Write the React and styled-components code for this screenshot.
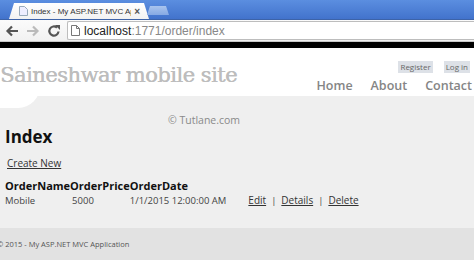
import styled, { createGlobalStyle } from 'styled-components';

const GlobalStyle = createGlobalStyle`
  html, body {
    margin: 0;
    padding: 0;
    background: #ffffff;
  }
  body {
    font-family: "Open Sans", "Noto Sans", sans-serif;
  }
`;

const Window = styled.div`
  width: 474px;
  height: 260px;
  display: flex;
  flex-direction: column;
  overflow: hidden;
`;

const TabStrip = styled.div`
  height: 19px;
  display: flex;
  align-items: flex-end;
  padding-left: 9px;
  background: linear-gradient(#5b8ee0, #4273cc);
  border-bottom: 1px solid #3d63a8;
`;

const Tab = styled.div`
  width: 140px;
  height: 16px;
  display: flex;
  align-items: center;
  gap: 3px;
  padding: 0 9px 0 10px;
  box-sizing: border-box;
  background: linear-gradient(#ffffff, #f2f2f2);
  clip-path: polygon(5px 0, calc(100% - 5px) 0, 100% 100%, 0 100%);
  font-family: "Liberation Sans", Arial, sans-serif;
  font-size: 8px;
  color: #333;
  white-space: nowrap;
  overflow: hidden;
`;

const TabTitle = styled.span`
  flex: 1;
  min-width: 0;
  overflow: hidden;
`;

const TabClose = styled.span`
  font-size: 10px;
  font-weight: bold;
  color: #555;
`;

const NewTab = styled.div`
  width: 22px;
  height: 9px;
  margin: 0 0 4px -2px;
  background: linear-gradient(#a9c4ee, #86a9e3);
  clip-path: polygon(3px 0, calc(100% - 3px) 0, 100% 100%, 0 100%);
`;

const Toolbar = styled.div`
  height: 21px;
  display: flex;
  align-items: center;
  gap: 5px;
  padding-left: 4px;
  background: linear-gradient(#fbfbfb, #f1f1f1);
  border-bottom: 1px solid #c8c8c8;
`;

const NavIcon = styled.div`
  width: 16px;
  height: 16px;
  display: flex;
  align-items: center;
  justify-content: center;
`;

const Omnibox = styled.div`
  flex: 1;
  height: 17px;
  display: flex;
  align-items: center;
  gap: 4px;
  padding-left: 3px;
  background: #ffffff;
  border: 1px solid #bdbdbd;
  border-right: none;
  border-radius: 2px 0 0 2px;
  font-family: "Liberation Sans", Arial, sans-serif;
  font-size: 12px;
  color: #888;
`;

const Host = styled.span`
  color: #222;
`;

const BlackBar = styled.div`
  height: 6px;
  background: #000;
`;

const Page = styled.div`
  flex: 1;
  display: flex;
  flex-direction: column;
  background: #efefef;
`;

const Header = styled.header`
  position: relative;
  z-index: 1;
  height: 48px;
  display: flex;
  justify-content: space-between;
  background: #ffffff;

  &::after {
    content: '';
    position: absolute;
    left: -22px;
    top: 38px;
    width: 62px;
    height: 22px;
    border-radius: 0 0 40px 0;
    background: #ffffff;
  }
`;

const SiteTitle = styled.div`
  padding-top: 15px;
  font-family: "DejaVu Serif", serif;
  font-size: 21px;
  letter-spacing: -0.5px;
  color: #bdbdbd;
  text-shadow: 0.4px 0 0 #bdbdbd;
  white-space: nowrap;
`;

const HeaderRight = styled.div`
  display: flex;
  flex-direction: column;
  align-items: flex-end;
  padding-top: 13px;
  gap: 5px;
`;

const LoginLinks = styled.div`
  display: flex;
  gap: 11px;
  padding-right: 4px;
`;

const LoginLink = styled.a`
  padding: 1px 2px;
  background: #dde1e7;
  font-size: 8px;
  line-height: 10px;
  color: #666;
  text-decoration: none;
`;

const Nav = styled.nav`
  display: flex;
  gap: 18px;
  padding-right: 2px;
`;

const NavLink = styled.a`
  font-size: 12.5px;
  font-weight: 600;
  color: #858585;
  text-decoration: none;
  line-height: 15px;
`;

const Main = styled.main`
  flex: 1;
  position: relative;
  padding: 18px 5px 0;
`;

const Watermark = styled.div`
  position: absolute;
  left: 168px;
  top: 17px;
  font-size: 10.5px;
  color: #8a8a8a;
`;

const Heading = styled.h2`
  margin: 13px 0 0;
  font-size: 17px;
  font-weight: 700;
  color: #111;
  line-height: 20px;
`;

const Link = styled.a`
  font-size: 10px;
  color: #333;
  text-decoration: underline;
`;

const CreateLink = styled(Link)`
  display: inline-block;
  margin: 9px 0 0 2px;
`;

const Table = styled.table`
  margin-top: 6px;
  border-collapse: collapse;
`;

const Th = styled.th`
  padding: 0;
  text-align: left;
  font-size: 11px;
  font-weight: 700;
  color: #111;
  line-height: 15px;
`;

const Td = styled.td`
  padding: 0 ${(p) => p.$pr || 0}px 0 ${(p) => p.$pl || 0}px;
  font-size: 9.5px;
  color: #444;
  line-height: 14px;
  white-space: nowrap;
`;

const Sep = styled.span`
  margin: 0 5px;
  font-size: 9.5px;
  color: #444;
`;

const Footer = styled.footer`
  height: 32px;
  display: flex;
  align-items: center;
  background: #e2e2e2;
  margin-left: -3px;
  font-size: 7.5px;
  color: #555;
`;

const Back = () => (
  <svg width="14" height="12" viewBox="0 0 14 12">
    <path d="M13 6H3M7 1.5L2.5 6 7 10.5" stroke="#555" strokeWidth="2.2" fill="none" />
  </svg>
);

const Forward = () => (
  <svg width="14" height="12" viewBox="0 0 14 12">
    <path d="M1 6h10M7 1.5L11.5 6 7 10.5" stroke="#bbb" strokeWidth="2.2" fill="none" />
  </svg>
);

const Reload = () => (
  <svg width="14" height="14" viewBox="0 0 14 14">
    <path d="M11.5 7.5A4.6 4.6 0 1 1 10 3.6" stroke="#555" strokeWidth="2.2" fill="none" />
    <path d="M8 1h5v5z" fill="#555" />
  </svg>
);

const PageIcon = () => (
  <svg width="9" height="11" viewBox="0 0 9 11">
    <path d="M0.5 0.5h5l3 3v7h-8z M5.5 0.5v3h3" stroke="#777" strokeWidth="1" fill="#fff" />
  </svg>
);

const Favicon = () => (
  <svg width="9" height="10" viewBox="0 0 9 10">
    <path d="M0.5 0.5h5l3 3v6h-8z" stroke="#9ab" strokeWidth="1" fill="#eef" />
  </svg>
);

export default function App() {
  return (
    <Window>
      <GlobalStyle />
      <TabStrip>
        <Tab>
          <Favicon />
          <TabTitle>Index - My ASP.NET MVC Ap</TabTitle>
          <TabClose>×</TabClose>
        </Tab>
        <NewTab />
      </TabStrip>
      <Toolbar>
        <NavIcon><Back /></NavIcon>
        <NavIcon><Forward /></NavIcon>
        <NavIcon><Reload /></NavIcon>
        <Omnibox>
          <PageIcon />
          <span><Host>localhost</Host>:1771/order/index</span>
        </Omnibox>
      </Toolbar>
      <BlackBar />
      <Page>
        <Header>
          <SiteTitle>Saineshwar mobile site</SiteTitle>
          <HeaderRight>
            <LoginLinks>
              <LoginLink>Register</LoginLink>
              <LoginLink>Log in</LoginLink>
            </LoginLinks>
            <Nav>
              <NavLink>Home</NavLink>
              <NavLink>About</NavLink>
              <NavLink>Contact</NavLink>
            </Nav>
          </HeaderRight>
        </Header>
        <Main>
          <Watermark>© Tutlane.com</Watermark>
          <Heading>Index</Heading>
          <CreateLink>Create New</CreateLink>
          <Table>
            <thead>
              <tr>
                <Th>OrderName</Th>
                <Th>OrderPrice</Th>
                <Th>OrderDate</Th>
                <Th />
              </tr>
            </thead>
            <tbody>
              <tr>
                <Td>Mobile</Td>
                <Td $pl={2}>5000</Td>
                <Td $pr={22}>1/1/2015 12:00:00 AM</Td>
                <Td>
                  <Link>Edit</Link>
                  <Sep>|</Sep>
                  <Link>Details</Link>
                  <Sep>|</Sep>
                  <Link>Delete</Link>
                </Td>
              </tr>
            </tbody>
          </Table>
        </Main>
        <Footer>© 2015 - My ASP.NET MVC Application</Footer>
      </Page>
    </Window>
  );
}
